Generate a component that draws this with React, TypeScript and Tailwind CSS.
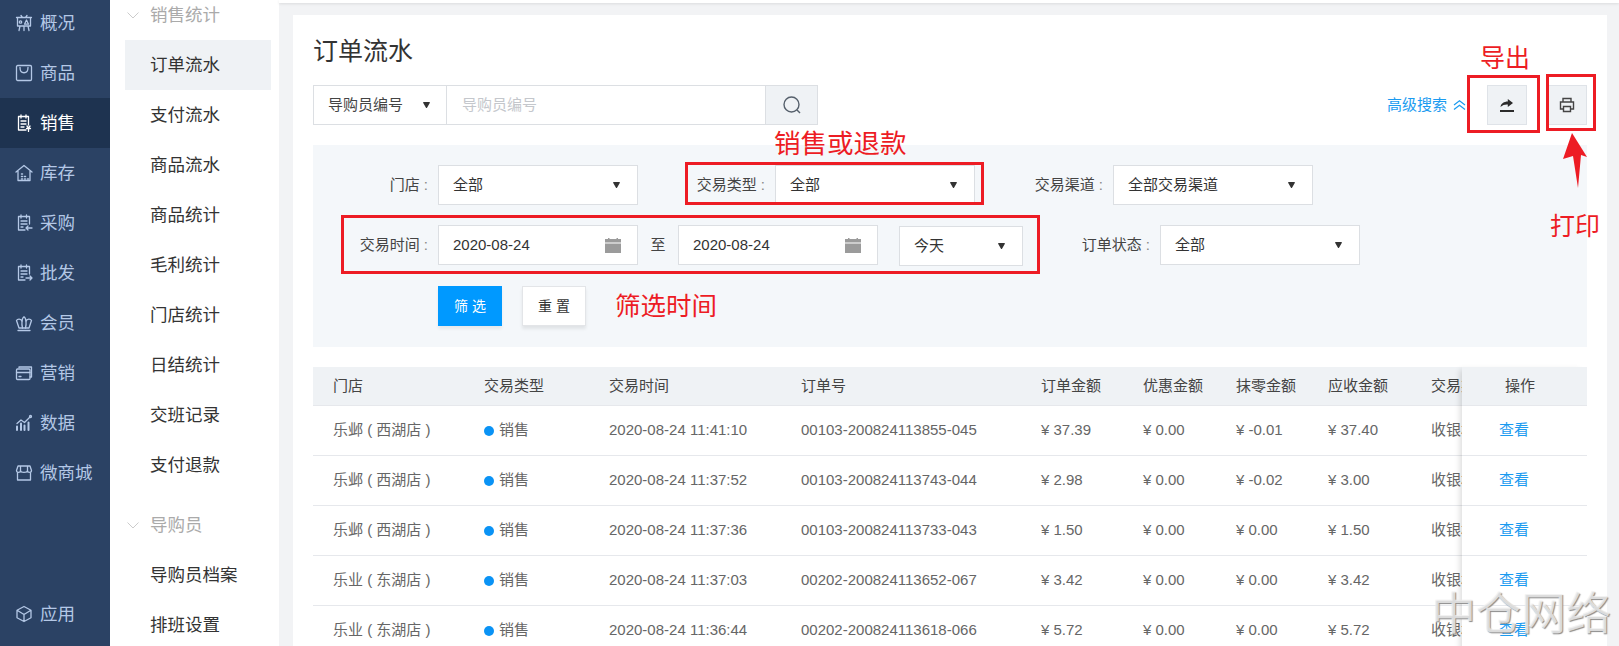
import type { ReactNode } from 'react';

const stroke = {
  fill: 'none',
  stroke: 'currentColor',
  strokeWidth: 1.3,
  strokeLinecap: 'round' as const,
  strokeLinejoin: 'round' as const,
};

function Icon({ children }: { children: ReactNode }) {
  return (
    <svg viewBox="0 0 18 18" className="h-[18px] w-[18px] shrink-0" {...stroke}>
      {children}
    </svg>
  );
}

const navItems: { label: string; icon: ReactNode; active?: boolean }[] = [
  {
    label: '概况',
    icon: (
      <Icon>
        <path d="M6 1.500 7.500 3.500M12 1.500 10.500 3.500M1.500 3.500h15M2.500 3.500v8.500h13V3.500M5 12l-1 4.500M13 12l1 4.500M9 12v4.500" />
        <circle cx="5.500" cy="8" r="1.200" />
        <path d="M9.500 10.200 11.500 6l2 4.200z" />
      </Icon>
    ),
  },
  {
    label: '商品',
    icon: (
      <Icon>
        <rect x="1.500" y="1.500" width="15" height="15" rx="1.200" />
        <path d="M5 3.500c0 7 8 7 8 0" />
      </Icon>
    ),
  },
  {
    label: '销售',
    active: true,
    icon: (
      <Icon>
        <path d="M11 16H3.500V2.500h10V11M6 1v3M11 1v3M6 7h5M6 10h5M6 13h3" />
        <path d="M12 12l1.500 2 1.500-2M11.500 14.500h4M13.500 14v3.500" />
      </Icon>
    ),
  },
  {
    label: '库存',
    icon: (
      <Icon>
        <path d="M1 8 9 1.500 17 8M3 7v9.500h12V7" />
        <path d="M6.500 10h1M6.500 12.500h1M6.500 15h1M9.500 12.500h1M9.500 15h1M12.500 15h1" strokeWidth={1.5} />
      </Icon>
    ),
  },
  {
    label: '采购',
    icon: (
      <Icon>
        <path d="M10 16H3.500V2.500h11V10M6 1v3M11.500 1v3M6 7h6M6 10h6M6 13h2" />
        <path d="M17 14h-6M13 12l-2 2 2 2" />
      </Icon>
    ),
  },
  {
    label: '批发',
    icon: (
      <Icon>
        <path d="M10 16H3.500V2.500h11V10M6 1v3M11.500 1v3M6 7h6M6 10h6M6 13h2" />
        <path d="M11 14h6M15 12l2 2-2 2" />
      </Icon>
    ),
  },
  {
    label: '会员',
    icon: (
      <Icon>
        <path d="M3 16.500h12M4 14h10L16.500 6.500c-1-2-4.500-2-5.500.5C10.500 4.500 10 3 9 3S7.500 4.500 7 7C6 4.500 2.500 4.500 1.500 6.500z" />
        <path d="M7 7c-.3 3 0 5 .5 7M11 7c.3 3 0 5-.5 7" />
      </Icon>
    ),
  },
  {
    label: '营销',
    icon: (
      <Icon>
        <path d="M4 3.500V3h12.500v10H15" />
        <rect x="1.500" y="5" width="13.500" height="10.500" rx="1" />
        <path d="M1.500 8.500H15M4 12.500h2" />
      </Icon>
    ),
  },
  {
    label: '数据',
    icon: (
      <Icon>
        <path d="M2 9.500 6 6l3.500 2.500L15 3" />
        <path d="M2 16v-3.500M6 16V9.500M9.500 16v-4.500M13.500 16V8.500" strokeWidth={2} />
        <circle cx="15.500" cy="2.500" r="1" />
      </Icon>
    ),
  },
  {
    label: '微商城',
    icon: (
      <Icon>
        <path d="M3 2h12l1.500 4.500c0 2.500-4 2.500-4 0 0 2.500-7 2.500-7 0 0 2.500-4 2.500-4 0zM5.500 2v4.500M12.500 2v4.500" />
        <path d="M2.500 9v7h13V9" />
      </Icon>
    ),
  },
];

const subGroupOne = ['订单流水', '支付流水', '商品流水', '商品统计', '毛利统计', '门店统计', '日结统计', '交班记录', '支付退款'];
const subGroupTwo = ['导购员档案', '排班设置'];

const rows = [
  ['乐邺 ( 西湖店 )', '2020-08-24 11:41:10', '00103-200824113855-045', '37.39', '0.00', '-0.01', '37.40'],
  ['乐邺 ( 西湖店 )', '2020-08-24 11:37:52', '00103-200824113743-044', '2.98', '0.00', '-0.02', '3.00'],
  ['乐邺 ( 西湖店 )', '2020-08-24 11:37:36', '00103-200824113733-043', '1.50', '0.00', '0.00', '1.50'],
  ['乐业 ( 东湖店 )', '2020-08-24 11:37:03', '00202-200824113652-067', '3.42', '0.00', '0.00', '3.42'],
  ['乐业 ( 东湖店 )', '2020-08-24 11:36:44', '00202-200824113618-066', '5.72', '0.00', '0.00', '5.72'],
];

const gridCols = 'grid grid-cols-[151px_125px_192px_240px_102px_93px_92px_103px_120px]';

function Caret() {
  return (
    <svg viewBox="0 0 8 7" className="h-[6px] w-[7px] shrink-0 fill-[#333]">
      <path d="M0 .8C0 .3.300 0 .8 0h6.400c.5 0 .8.300.8.800 0 .2-.1.400-.2.500L4.600 6.700c-.3.400-.9.400-1.200 0L.2 1.300C.1 1.200 0 1 0 .8z" />
    </svg>
  );
}

function CalendarIcon() {
  return (
    <svg viewBox="0 0 16 15" className="h-[15px] w-4 shrink-0 fill-[#9b9b9b]">
      <path d="M1 1h2V0h1.500v1h7V0H13v1h3v3.500H0V1zM0 5.500h16V15H0z" />
    </svg>
  );
}

function SelectBox({ value, className }: { value: string; className: string }) {
  return (
    <div className={`flex h-10 items-center justify-between border border-[#dcdfe3] bg-white pl-[14px] pr-[17px] text-[15px] text-[#333] ${className}`}>
      <span>{value}</span>
      <Caret />
    </div>
  );
}

function DateBox() {
  return (
    <div className="flex h-10 w-[200px] items-center justify-between border border-[#dcdfe3] bg-white pl-[14px] pr-4 text-[15px] text-[#333]">
      <span>2020-08-24</span>
      <CalendarIcon />
    </div>
  );
}

function Label({ children, className }: { children: string; className: string }) {
  return <div className={`pr-[10px] text-right text-[15px] text-[#444] ${className}`}>{children} <span className="text-[#888]">:</span></div>;
}

export default function App() {
  return (
    <div className="relative flex h-[646px] w-[1619px] overflow-hidden bg-[#f2f3f5] font-['Liberation_Sans','Noto_Sans_CJK_SC',sans-serif]">
      {/* main nav */}
      <aside className="flex w-[110px] shrink-0 flex-col justify-between bg-[#2b4264] pb-[7px] text-[17.500px] text-[#b4c8e6]">
        <nav className="-mt-[2px]">
          {navItems.map((item) => (
            <div
              key={item.label}
              className={`flex h-[50px] items-center gap-[7px] pl-[15px] ${item.active ? 'bg-[#1e3350] text-white' : ''}`}
            >
              {item.icon}
              <span>{item.label}</span>
            </div>
          ))}
        </nav>
        <div className="flex h-[50px] items-center gap-[7px] pl-[15px]">
          <Icon>
            <path d="M9 1.500 16 5.300v7.400L9 16.500 2 12.700V5.300zM2.500 5.500 9 9.500l6.500-4M9 9.500v6.500" />
          </Icon>
          <span>应用</span>
        </div>
      </aside>

      {/* sub nav */}
      <aside className="w-[169px] shrink-0 bg-white pl-[15px] pr-2 text-[17.500px] text-[#333]">
        <div className="-mt-[10px] flex h-[50px] items-center gap-[11px] pl-[2px] text-[#aaa]">
          <svg viewBox="0 0 12 7" className="h-[7px] w-3 fill-none stroke-[#ccc]">
            <path d="M.5.5 6 6l5.500-5.500" />
          </svg>
          <span>销售统计</span>
        </div>
        {subGroupOne.map((name, i) => (
          <div key={name} className={`flex h-[50px] items-center pl-[25px] ${i === 0 ? 'bg-[#eff2f5]' : ''}`}>
            {name}
          </div>
        ))}
        <div className="mt-[10px] flex h-[50px] items-center gap-[11px] pl-[2px] text-[#aaa]">
          <svg viewBox="0 0 12 7" className="h-[7px] w-3 fill-none stroke-[#ccc]">
            <path d="M.5.5 6 6l5.500-5.500" />
          </svg>
          <span>导购员</span>
        </div>
        {subGroupTwo.map((name) => (
          <div key={name} className="flex h-[50px] items-center pl-[25px]">
            {name}
          </div>
        ))}
      </aside>

      {/* content */}
      <main className="flex-1">
        <div className="h-[3px] bg-white shadow-[0_1px_3px_rgba(0,0,0,0.1)]" />
        <section className="ml-[14px] mt-3 h-[700px] w-[1314px] bg-white px-5 pt-5">
          <h1 className="mb-[18px] h-8 text-[25px] leading-8 text-[#333]">订单流水</h1>

          <div className="flex h-10 items-center justify-between">
            <div className="flex h-10 w-[505px] border border-[#dcdfe3] text-[15px]">
              <div className="flex w-[133px] items-center justify-between border-r border-[#dcdfe3] pl-[14px] pr-4 text-[#444]">
                <span>导购员编号</span>
                <Caret />
              </div>
              <div className="flex flex-1 items-center pl-[15px] text-[#c4c7cc]">导购员编号</div>
              <div className="flex w-[52px] items-center justify-center border-l border-[#dcdfe3] bg-[#eff2f5]">
                <svg viewBox="0 0 18 18" className="h-[18px] w-[18px] fill-none stroke-[#56606c] stroke-[1.4]">
                  <circle cx="8.500" cy="8.500" r="7.500" />
                  <path d="m14 14 3 3" />
                </svg>
              </div>
            </div>
            <div className="flex items-center">
              <span className="text-[15px] text-[#1b9bf0]">高级搜索</span>
              <svg viewBox="0 0 13 10" className="ml-[6px] mr-[21px] h-[10px] w-[13px] fill-none stroke-[#1b9bf0] stroke-[1.2]">
                <path d="M1 5 6.500 .8 12 5M1 9.500 6.500 5.300 12 9.500" />
              </svg>
              <div className="flex h-10 w-10 items-center justify-center border border-[#dfe3e8] bg-[#eff2f5]">
                <svg viewBox="0 0 16 16" className="h-4 w-4 fill-[#2b2b2b]">
                  <path d="M1.500 10C2 6.500 5 4.700 8.800 4.600V2L14 6l-5.200 4V7.500C6 7.300 3.500 8 1.500 10z" />
                  <path d="M1 13h14v2H1z" />
                </svg>
              </div>
              <div className="ml-5 flex h-10 w-10 items-center justify-center border border-[#dfe3e8] bg-[#eff2f5]">
                <svg viewBox="0 0 16 16" className="h-4 w-4 fill-none stroke-[#444] stroke-[1.4]">
                  <path d="M4 5V1.500h8V5M4 12H1.500V5h13v7H12" />
                  <path d="M4.500 9.500h7v5h-7z" />
                </svg>
              </div>
            </div>
          </div>

          {/* filters */}
          <div className="mt-5 flex h-[202px] flex-col gap-5 bg-[#f4f7fa] pt-5">
            <div className="flex h-10 items-center">
              <Label className="w-[125px]">门店</Label>
              <SelectBox value="全部" className="w-[200px]" />
              <Label className="ml-[12px] w-[125px]">交易类型</Label>
              <SelectBox value="全部" className="w-[200px]" />
              <Label className="ml-[12px] w-[126px]">交易渠道</Label>
              <SelectBox value="全部交易渠道" className="w-[200px]" />
            </div>
            <div className="flex h-10 items-center">
              <Label className="w-[125px]">交易时间</Label>
              <DateBox />
              <div className="w-[40px] text-center text-[15px] text-[#444]">至</div>
              <DateBox />
              <SelectBox value="今天" className="ml-[21px] mt-[2px] w-[124px]" />
              <Label className="w-[137px]">订单状态</Label>
              <SelectBox value="全部" className="w-[200px]" />
            </div>
            <div className="ml-[125px] mt-px flex gap-5 text-[14px]">
              <div className="flex h-10 w-16 items-center justify-center bg-[#0099ff] text-white shadow-[0_3px_3px_rgba(0,0,0,0.06)]">筛 选</div>
              <div className="flex h-10 w-16 items-center justify-center border border-[#e3e5e8] bg-white text-[#333] shadow-[0_3px_3px_rgba(0,0,0,0.08)]">重 置</div>
            </div>
          </div>

          {/* table */}
          <div className="mt-5 flex text-[15px] text-[#666]">
            <div className="w-[1149px] overflow-hidden">
              <div className={`${gridCols} h-[39px] items-center border-b border-[#e6e8ec] bg-[#eff2f5] text-[#444]`}>
                {['门店', '交易类型', '交易时间', '订单号', '订单金额', '优惠金额', '抹零金额', '应收金额', '交易渠道'].map((h) => (
                  <div key={h} className="pl-5">{h}</div>
                ))}
              </div>
              {rows.map((row) => (
                <div key={row[2]} className={`${gridCols} h-[50px] items-center border-b border-[#e6e8ec] whitespace-nowrap`}>
                  <div className="pl-5">{row[0]}</div>
                  <div className="flex items-center gap-[5px] pl-5">
                    <span className="h-[10px] w-[10px] rounded-full bg-[#0a93f5]" />
                    销售
                  </div>
                  <div className="pl-5">{row[1]}</div>
                  <div className="pl-5">{row[2]}</div>
                  <div className="pl-5">¥ {row[3]}</div>
                  <div className="pl-5">¥ {row[4]}</div>
                  <div className="pl-5">¥ {row[5]}</div>
                  <div className="pl-5">¥ {row[6]}</div>
                  <div className="pl-5">收银机</div>
                </div>
              ))}
            </div>
            <div className="relative z-10 w-[125px] bg-white shadow-[-5px_0_6px_-3px_rgba(0,0,0,0.14)]">
              <div className="flex h-[39px] items-center border-b border-[#e6e8ec] bg-[#eff2f5] pl-[43px] text-[#444]">操作</div>
              {rows.map((row) => (
                <div key={row[2]} className="flex h-[50px] items-center border-b border-[#e6e8ec] pl-[37px] text-[#1b9bf0]">
                  查看
                </div>
              ))}
            </div>
          </div>
        </section>
      </main>

      {/* red annotations drawn over the page */}
      <div className="absolute left-[685px] top-[162px] z-20 h-[43px] w-[299px] border-[3px] border-[#ed1c24]" />
      <div className="absolute left-[341px] top-[215px] z-20 h-[59px] w-[699px] border-[3px] border-[#ed1c24]" />
      <div className="absolute left-[1467px] top-[75px] z-20 h-[58px] w-[73px] border-[3px] border-[#ed1c24]" />
      <div className="absolute left-[1546px] top-[74px] z-20 h-[57px] w-[50px] border-[3px] border-[#ed1c24]" />
      <div className="absolute left-[1480px] top-[43px] z-20 text-[25px] leading-[30px] text-[#ed1c24]">导出</div>
      <div className="absolute left-[1550px] top-[211px] z-20 text-[25px] leading-[30px] text-[#ed1c24]">打印</div>
      <div className="absolute left-[774px] top-[128px] z-20 text-[26.500px] leading-[32px] text-[#ed1c24]">销售或退款</div>
      <div className="absolute left-[615px] top-[290px] z-20 text-[25.500px] leading-[32px] text-[#ed1c24]">筛选时间</div>
      <svg viewBox="0 0 24 55" className="absolute left-[1563px] top-[133px] z-20 h-[55px] w-6 fill-[#ed1c24]">
        <path d="M9 0 24 24 18 22 15 55 10 23 0 26z" />
      </svg>

      {/* watermark */}
      <div className="absolute left-[1431px] top-[587px] z-20 text-[45px] leading-[56px] text-[#f2f2f2]/80 [text-shadow:1px_1px_1px_#8a8a8a]">
        中仓网络
      </div>
    </div>
  );
}
